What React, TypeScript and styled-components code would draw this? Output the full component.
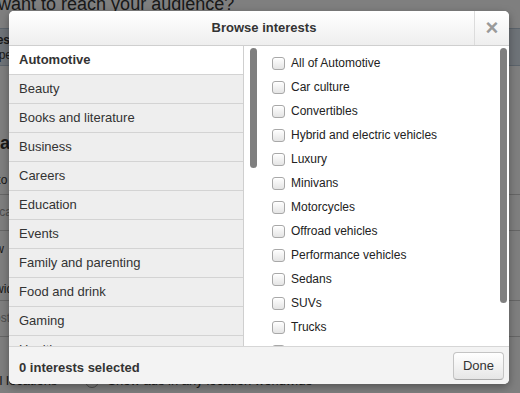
import React from 'react'
import styled, { createGlobalStyle } from 'styled-components'

const categories = [
  'Automotive',
  'Beauty',
  'Books and literature',
  'Business',
  'Careers',
  'Education',
  'Events',
  'Family and parenting',
  'Food and drink',
  'Gaming',
  'Health',
  'Hobbies and interests',
]

const subcategories = [
  'All of Automotive',
  'Car culture',
  'Convertibles',
  'Hybrid and electric vehicles',
  'Luxury',
  'Minivans',
  'Motorcycles',
  'Offroad vehicles',
  'Performance vehicles',
  'Sedans',
  'SUVs',
  'Trucks',
  'Vintage cars',
]

const GlobalStyle = createGlobalStyle`
  html, body {
    margin: 0;
    padding: 0;
  }
  body {
    width: 520px;
    height: 393px;
    overflow: hidden;
    background: #fff;
    font-family: 'Liberation Sans', Arial, Helvetica, sans-serif;
    color: #333;
  }
`

// page behind the dialog
const Page = styled.div`
  position: relative;
  width: 520px;
  height: 393px;
  overflow: hidden;
  background: #fff;
`

const PageColumn = styled.div`
  display: flex;
  flex-direction: column;
  margin-left: -102px;
  width: 640px;
`

const PageTitle = styled.h1`
  margin: -7px 0 0;
  font-size: 18px;
  line-height: 22px;
  font-weight: normal;
  color: #333;
`

const InfoBox = styled.div`
  margin-top: 13px;
  height: 38px;
  padding: 4px 0 0 49px;
  box-sizing: border-box;
  background: #dde7f1;
  border: 1px solid #b9c9d9;
  font-size: 12px;
  line-height: 15px;
  strong {
    display: block;
  }
`

const SectionTitle = styled.h2`
  margin: 66px 0 0 70px;
  font-size: 18px;
  line-height: 22px;
`

const Hint = styled.p<{ indent: number; top: number }>`
  margin: ${({ top }) => top}px 0 0 ${({ indent }) => indent}px;
  font-size: 12px;
  line-height: 16px;
`

const Field = styled.div<{ top: number }>`
  margin-top: ${({ top }) => top}px;
  height: 35px;
  border-top: 1px solid #ccc;
  border-bottom: 1px solid #ccc;
  padding-left: 88px;
  font-size: 12px;
  line-height: 35px;
  color: #999;
`

const RadioRow = styled.div`
  margin: 36px 0 0 90px;
  display: flex;
  align-items: center;
  gap: 8px;
  font-size: 13px;
  line-height: 16px;
`

const Radio = styled.span`
  width: 12px;
  height: 12px;
  border: 1px solid #999;
  border-radius: 50%;
  margin-left: 20px;
`

const Overlay = styled.div`
  position: absolute;
  inset: 0;
  background: rgba(0, 0, 0, 0.5);
`

// dialog
const Dialog = styled.div`
  position: absolute;
  left: 9px;
  top: 11px;
  width: 500px;
  height: 373px;
  display: flex;
  flex-direction: column;
  background: #fff;
  border-radius: 5px;
  overflow: hidden;
  box-shadow: 0 3px 8px rgba(0, 0, 0, 0.35);
`

const Header = styled.div`
  display: flex;
  height: 34px;
  flex-shrink: 0;
  border-bottom: 1px solid #cfcfcf;
  background: linear-gradient(#ffffff, #eeeeee);
`

const Title = styled.div`
  flex: 1;
  padding-left: 45px;
  text-align: center;
  font-size: 13px;
  font-weight: bold;
  line-height: 34px;
  color: #333;
`

const CloseButton = styled.button`
  width: 35px;
  border: 0;
  border-left: 1px solid #dcdcdc;
  background: transparent;
  color: #9a9a9a;
  font-family: 'Liberation Sans', Arial, sans-serif;
  font-size: 22px;
  font-weight: bold;
  line-height: 34px;
  padding: 0;
  cursor: pointer;
`

const Body = styled.div`
  display: flex;
  height: 300px;
  flex-shrink: 0;
  overflow: hidden;
`

const Pane = styled.div<{ width: number }>`
  position: relative;
  width: ${({ width }) => width}px;
  flex-shrink: 0;
  overflow: hidden;
`

const CategoryList = styled.ul`
  list-style: none;
  margin: 0;
  padding: 0;
  width: 234px;
  border-right: 1px solid #cfcfcf;
`

const CategoryItem = styled.li<{ active?: boolean }>`
  height: 28px;
  padding-left: 10px;
  border-bottom: 1px solid #d3d3d3;
  background: ${({ active }) => (active ? '#fff' : '#eeeeee')};
  font-size: 13px;
  font-weight: ${({ active }) => (active ? 'bold' : 'normal')};
  line-height: 28px;
  color: #333;
`

const OptionList = styled.div`
  display: flex;
  flex-direction: column;
  padding: 5px 0 0 12px;
`

const Option = styled.label`
  display: flex;
  align-items: center;
  gap: 6px;
  height: 24px;
  font-size: 12px;
  color: #222;
`

const Check = styled.span`
  width: 11px;
  height: 11px;
  border: 1px solid #a8a8a8;
  border-radius: 3px;
  background: linear-gradient(#ffffff, #e4e4e4);
  box-shadow: inset 0 1px 0 #fff;
`

const Scrollbar = styled.div<{ top: number; right: number; length: number }>`
  position: absolute;
  top: ${({ top }) => top}px;
  right: ${({ right }) => right}px;
  width: 7px;
  height: ${({ length }) => length}px;
  border-radius: 4px;
  background: #7f7f7f;
`

const Footer = styled.div`
  display: flex;
  flex: 1;
  align-items: center;
  justify-content: space-between;
  padding: 0 5px 0 10px;
  border-top: 1px solid #d6d6d6;
  background: #f3f3f3;
`

const Count = styled.span`
  margin-top: 3px;
  font-size: 13px;
  font-weight: bold;
  color: #333;
`

const DoneButton = styled.button`
  width: 51px;
  height: 28px;
  border: 1px solid #c4c4c4;
  border-bottom-color: #aaa;
  border-radius: 4px;
  background: linear-gradient(#ffffff, #e6e6e6);
  font-family: 'Liberation Sans', Arial, sans-serif;
  font-size: 13px;
  color: #333;
  padding: 0;
`

const App: React.FC = () => {
  return (
    <Page>
      <GlobalStyle />
      <PageColumn>
        <PageTitle>How do you want to reach your audience?</PageTitle>
        <InfoBox>
          <strong>Categories</strong>
          <span>Choose specific audiences</span>
        </InfoBox>
        <SectionTitle>Location</SectionTitle>
        <Hint indent={80} top={18}>Go to the full list</Hint>
        <Field top={6}>Location name</Field>
        <Hint indent={76} top={10}>Show</Hint>
        <Hint indent={66} top={24}>Worldwide</Hint>
        <Field top={3}>Postcode list</Field>
        <RadioRow>
          All locations
          <Radio />
          Show ads in any location worldwide
        </RadioRow>
      </PageColumn>
      <Overlay />
      <Dialog>
        <Header>
          <Title>Browse interests</Title>
          <CloseButton aria-label="Close">×</CloseButton>
        </Header>
        <Body>
          <Pane width={251}>
            <CategoryList>
              {categories.map((name, i) => (
                <CategoryItem key={name} active={i === 0}>
                  {name}
                </CategoryItem>
              ))}
            </CategoryList>
            <Scrollbar top={2} right={3} length={120} />
          </Pane>
          <Pane width={249}>
            <OptionList>
              {subcategories.map((name) => (
                <Option key={name}>
                  <Check />
                  {name}
                </Option>
              ))}
            </OptionList>
            <Scrollbar top={2} right={2} length={255} />
          </Pane>
        </Body>
        <Footer>
          <Count>0 interests selected</Count>
          <DoneButton>Done</DoneButton>
        </Footer>
      </Dialog>
    </Page>
  )
}

export default App
